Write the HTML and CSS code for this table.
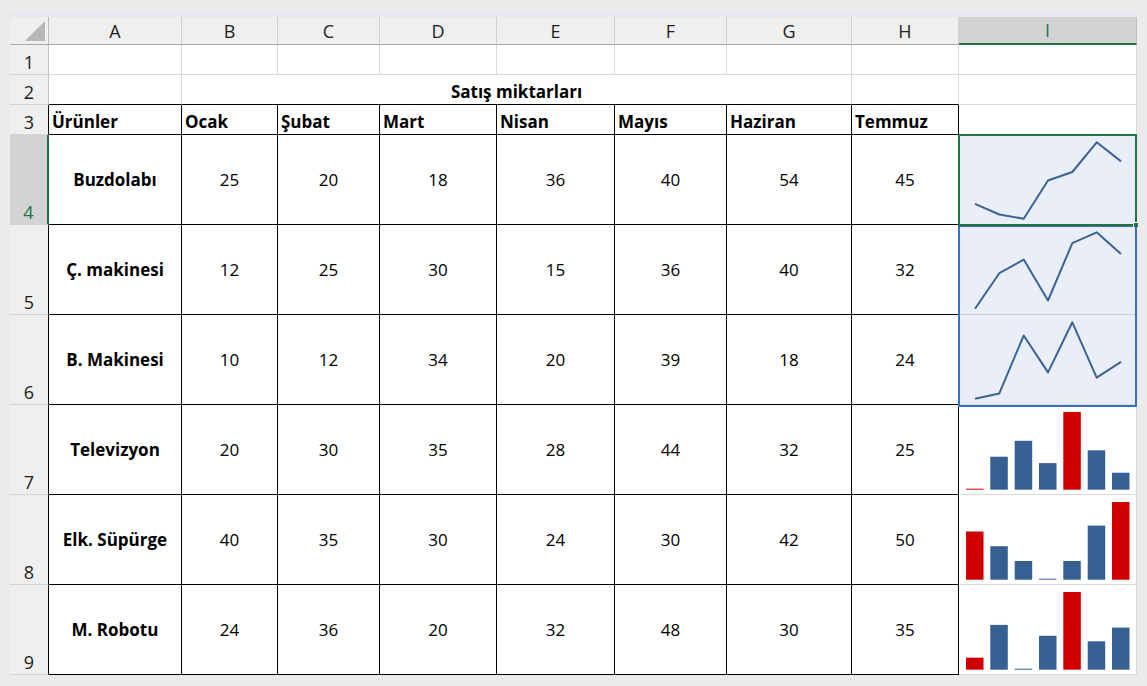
FILE: index.html
```html
<!DOCTYPE html>
<html lang="tr">
<head>
    <meta charset="UTF-8">
    <meta name="viewport" content="width=device-width, initial-scale=1.0">
    <title>Satış miktarları</title>
    <link rel="stylesheet" href="styles.css">
</head>
<body>
    <div class="frame">
        <div class="strip"></div>
        <div class="sheet">
            <!-- Başlık satırı -->
            <div class="hd corner"><span class="tri"></span></div>
            <div class="hd col">A</div>
            <div class="hd col">B</div>
            <div class="hd col">C</div>
            <div class="hd col">D</div>
            <div class="hd col">E</div>
            <div class="hd col">F</div>
            <div class="hd col">G</div>
            <div class="hd col">H</div>
            <div class="hd col active">I</div>

            <!-- 1 -->
            <div class="rh">1</div>
            <div class="c"></div><div class="c"></div><div class="c"></div><div class="c"></div>
            <div class="c"></div><div class="c"></div><div class="c"></div><div class="c"></div>
            <div class="c"></div>

            <!-- 2 -->
            <div class="rh">2</div>
            <div class="c top"></div>
            <div class="c top merged bold">Satış miktarları</div>
            <div class="c top"></div>
            <div class="c"></div>

            <!-- 3 -->
            <div class="rh dark">3</div>
            <div class="c t head">Ürünler</div>
            <div class="c t head">Ocak</div>
            <div class="c t head">Şubat</div>
            <div class="c t head">Mart</div>
            <div class="c t head">Nisan</div>
            <div class="c t head">Mayıs</div>
            <div class="c t head">Haziran</div>
            <div class="c t head">Temmuz</div>
            <div class="c"></div>

            <!-- 4 -->
            <div class="rh big sel">4</div>
            <div class="c t big name">Buzdolabı</div>
            <div class="c t big">25</div><div class="c t big">20</div><div class="c t big">18</div>
            <div class="c t big">36</div><div class="c t big">40</div><div class="c t big">54</div>
            <div class="c t big">45</div>
            <div class="c spark blue">
                <svg width="177" height="89" viewBox="0 0 177 89">
                    <polyline points="16,68.8 40.3,79.5 64.7,83.7 89,45.5 113.3,37 137.7,7.3 162,26.4"/>
                </svg>
            </div>

            <!-- 5 -->
            <div class="rh big dark">5</div>
            <div class="c t big name">Ç. makinesi</div>
            <div class="c t big">12</div><div class="c t big">25</div><div class="c t big">30</div>
            <div class="c t big">15</div><div class="c t big">36</div><div class="c t big">40</div>
            <div class="c t big">32</div>
            <div class="c spark blue mid">
                <svg width="177" height="89" viewBox="0 0 177 89">
                    <polyline points="16,83.7 40.3,48.2 64.7,34.6 89,75.5 113.3,18.2 137.7,7.3 162,29.1"/>
                </svg>
            </div>

            <!-- 6 -->
            <div class="rh big dark">6</div>
            <div class="c t big name">B. Makinesi</div>
            <div class="c t big">10</div><div class="c t big">12</div><div class="c t big">34</div>
            <div class="c t big">20</div><div class="c t big">39</div><div class="c t big">18</div>
            <div class="c t big">24</div>
            <div class="c spark blue">
                <svg width="177" height="89" viewBox="0 0 177 89">
                    <polyline points="16,83.7 40.3,78.4 64.7,20.5 89,57.4 113.3,7.3 137.7,62.6 162,46.8"/>
                </svg>
            </div>

            <!-- 7 -->
            <div class="rh big dark">7</div>
            <div class="c t big name">Televizyon</div>
            <div class="c t big">20</div><div class="c t big">30</div><div class="c t big">35</div>
            <div class="c t big">28</div><div class="c t big">44</div><div class="c t big">32</div>
            <div class="c t big">25</div>
            <div class="c spark">
                <svg width="177" height="89" viewBox="0 0 177 89">
                    <rect class="hi" x="7" y="83.7" width="17.5" height="1"/>
                    <rect x="31.3" y="51.7" width="17.5" height="33"/>
                    <rect x="55.7" y="35.8" width="17.5" height="48.9"/>
                    <rect x="80" y="58.1" width="17.5" height="26.6"/>
                    <rect class="hi" x="104.3" y="7" width="17.5" height="77.7"/>
                    <rect x="128.7" y="45.3" width="17.5" height="39.4"/>
                    <rect x="153" y="67.7" width="17.5" height="17"/>
                </svg>
            </div>

            <!-- 8 -->
            <div class="rh big dark">8</div>
            <div class="c t big name">Elk. Süpürge</div>
            <div class="c t big">40</div><div class="c t big">35</div><div class="c t big">30</div>
            <div class="c t big">24</div><div class="c t big">30</div><div class="c t big">42</div>
            <div class="c t big">50</div>
            <div class="c spark">
                <svg width="177" height="89" viewBox="0 0 177 89">
                    <rect class="hi" x="7" y="36.5" width="17.5" height="48.2"/>
                    <rect x="31.3" y="51.2" width="17.5" height="33.5"/>
                    <rect x="55.7" y="66" width="17.5" height="18.7"/>
                    <rect x="80" y="83.7" width="17.5" height="1"/>
                    <rect x="104.3" y="66" width="17.5" height="18.7"/>
                    <rect x="128.7" y="30.6" width="17.5" height="54.1"/>
                    <rect class="hi" x="153" y="7" width="17.5" height="77.7"/>
                </svg>
            </div>

            <!-- 9 -->
            <div class="rh big dark">9</div>
            <div class="c t big name">M. Robotu</div>
            <div class="c t big">24</div><div class="c t big">36</div><div class="c t big">20</div>
            <div class="c t big">32</div><div class="c t big">48</div><div class="c t big">30</div>
            <div class="c t big">35</div>
            <div class="c spark">
                <svg width="177" height="89" viewBox="0 0 177 89">
                    <rect class="hi" x="7" y="72.7" width="17.5" height="12"/>
                    <rect x="31.3" y="39.9" width="17.5" height="44.8"/>
                    <rect x="55.7" y="83.7" width="17.5" height="1"/>
                    <rect x="80" y="50.8" width="17.5" height="33.9"/>
                    <rect class="hi" x="104.3" y="7" width="17.5" height="77.7"/>
                    <rect x="128.7" y="56.3" width="17.5" height="28.4"/>
                    <rect x="153" y="42.6" width="17.5" height="42.1"/>
                </svg>
            </div>

            <!-- Seçim çerçeveleri -->
            <div class="group-box"></div>
            <div class="active-box"></div>
            <div class="handle"></div>
        </div>
    </div>
</body>
</html>
```

FILE: styles.css
```css
body {
    margin: 0;
    background-color: #ebebeb;
    font-family: "Open Sans", "Liberation Sans", sans-serif;
    color: #000;
}
.frame {
    padding: 12px 10px 0 10px;
}
.strip {
    width: 1127px;
    height: 5px;
    background-color: #e5e8ed;
}
.sheet {
    position: relative;
    width: 1127px;
    display: grid;
    grid-template-columns: 39px 133px 96px 102px 117px 118px 112px 125px 107px 178px;
    grid-template-rows: 28px 30px 30px 30px repeat(6, 90px);
    background-color: #fff;
}
.sheet > div {
    box-sizing: border-box;
}

/* başlıklar */
.hd {
    background-color: #efefef;
    border-right: 1px solid #cfcfcf;
    border-bottom: 1px solid #a9a9a9;
    display: flex;
    align-items: center;
    justify-content: center;
    font-size: 18px;
    color: #1d1d1d;
}
.hd.active {
    background-color: #d3d3d3;
    border-bottom: 2px solid #217346;
    color: #217346;
    border-right: 1px solid #bdbdbd;
}
.corner {
    position: relative;
    border-right: 1px solid #bdbdbd;
}
.tri {
    position: absolute;
    right: 3px;
    bottom: 3px;
    width: 20px;
    height: 20px;
    background-color: #b6b6b6;
    clip-path: polygon(100% 0, 100% 100%, 0 100%);
}
.rh {
    background-color: #efefef;
    border-right: 1px solid #c4c4c4;
    border-bottom: 1px solid #d4d4d4;
    display: flex;
    align-items: flex-end;
    justify-content: center;
    font-size: 18px;
    line-height: 24px;
    color: #1d1d1d;
}
.rh.dark {
    border-right-color: #000;
}
.rh.sel {
    background-color: #d3d3d3;
    border-right: 2px solid #217346;
    color: #217346;
}

/* hücreler */
.c {
    border-right: 1px solid #dadada;
    border-bottom: 1px solid #dadada;
    font-size: 17px;
    line-height: 23px;
    display: flex;
    align-items: flex-end;
    padding: 0 3px 1px 3px;
    white-space: nowrap;
}
.c.top {
    border-bottom-color: #000;
}
.c.merged {
    grid-column: span 6;
    justify-content: center;
}
.bold, .head, .name {
    font-weight: bold;
}
.c.t {
    border-right-color: #000;
    border-bottom-color: #000;
}
.c.big {
    align-items: center;
    justify-content: center;
    padding: 0;
}
.spark {
    padding: 0;
    align-items: flex-start;
}
.spark svg {
    display: block;
}
.spark.blue {
    background-color: #eaeef8;
}
.spark.mid {
    border-bottom-color: #c9ced8;
}
.spark polyline {
    fill: none;
    stroke: #3a6399;
    stroke-width: 2;
    stroke-linejoin: round;
}
.spark rect {
    fill: #376092;
}
.spark rect.hi {
    fill: #d00000;
}

/* seçim */
.group-box {
    position: absolute;
    left: 948px;
    top: 208px;
    width: 179px;
    height: 182px;
    border: 2px solid #3b6fc6;
    box-sizing: border-box;
}
.active-box {
    position: absolute;
    left: 948px;
    top: 117px;
    width: 179px;
    height: 92px;
    border: 2px solid #217346;
    box-sizing: border-box;
}
.handle {
    position: absolute;
    left: 1123px;
    top: 205px;
    width: 5px;
    height: 5px;
    background-color: #217346;
    border-left: 1px solid #fff;
    border-top: 1px solid #fff;
}
```
